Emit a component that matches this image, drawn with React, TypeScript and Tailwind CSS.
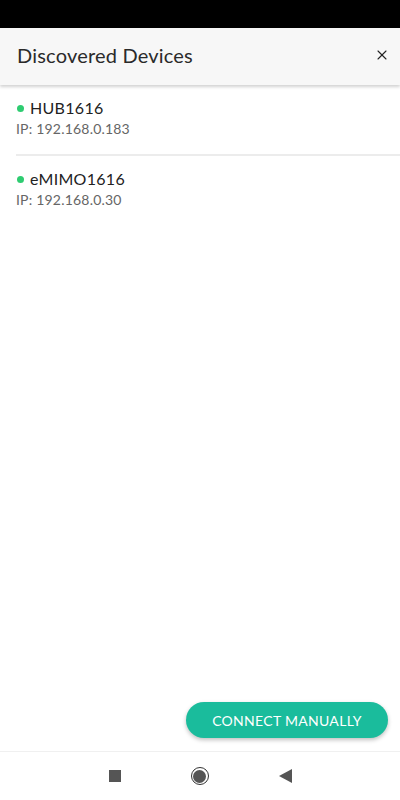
import { X } from 'lucide-react';

// --- 型定義 ---
interface Device {
  name: string;
  ip: string;
}

const devices: Device[] = [
  { name: 'HUB1616', ip: '192.168.0.183' },
  { name: 'eMIMO1616', ip: '192.168.0.30' },
];

export default function App() {
  return (
    <div className="w-[400px] h-[800px] flex flex-col bg-white font-['Lato','Open_Sans',sans-serif] overflow-hidden">
      {/* status bar */}
      <div className="h-[28px] bg-black shrink-0" />

      {/* header */}
      <div className="h-[57px] shrink-0 bg-[#f7f7f7] flex items-center justify-between pl-[17px] pr-[6px] pb-[3px] shadow-[0_2px_3px_rgba(0,0,0,0.18)] relative z-10">
        <h1 className="text-[20px] text-[#2a2a2a] tracking-[0.2px]">Discovered Devices</h1>
        <button className="w-6 h-6 flex items-center justify-center text-[#222]">
          <X size={16} strokeWidth={1.6} />
        </button>
      </div>

      {/* device list */}
      <div className="flex-1 flex flex-col">
        {devices.map((d, i) => (
          <div key={d.name} className={`ml-[16px] pt-[12px] pb-[15px] ${i < devices.length - 1 ? 'border-b-2 border-[#ececec]' : ''}`}>
            <div className="flex items-center gap-[6px]">
              <span className="w-[7px] h-[7px] rounded-full bg-[#2ecc71] ml-[1px]" />
              <span className="text-[16px] text-[#222] leading-[22px] tracking-[0.3px]">{d.name}</span>
            </div>
            <p className="text-[14px] text-[#666] leading-[20px] tracking-[0.2px]">IP: {d.ip}</p>
          </div>
        ))}
      </div>

      {/* connect manually */}
      <div className="flex justify-end pr-[12px] pb-[13px]">
        <button className="h-[36px] w-[202px] rounded-full bg-[#1abc9c] text-white text-[14px] tracking-[0.3px] shadow-[0_2px_4px_rgba(0,0,0,0.25)]">
          CONNECT MANUALLY
        </button>
      </div>

      {/* nav bar */}
      <div className="h-[49px] shrink-0 border-t border-[#f0f0f0] flex items-center justify-center gap-[70px]">
        <span className="w-[12px] h-[12px] bg-[#555]" />
        <span className="w-[18px] h-[18px] rounded-full border-[1.5px] border-[#333] flex items-center justify-center">
          <span className="w-[13px] h-[13px] rounded-full bg-[#555]" />
        </span>
        <svg width="13" height="14" viewBox="0 0 13 14">
          <path d="M13 0 L0 7 L13 14 Z" fill="#555" />
        </svg>
      </div>
    </div>
  );
}
